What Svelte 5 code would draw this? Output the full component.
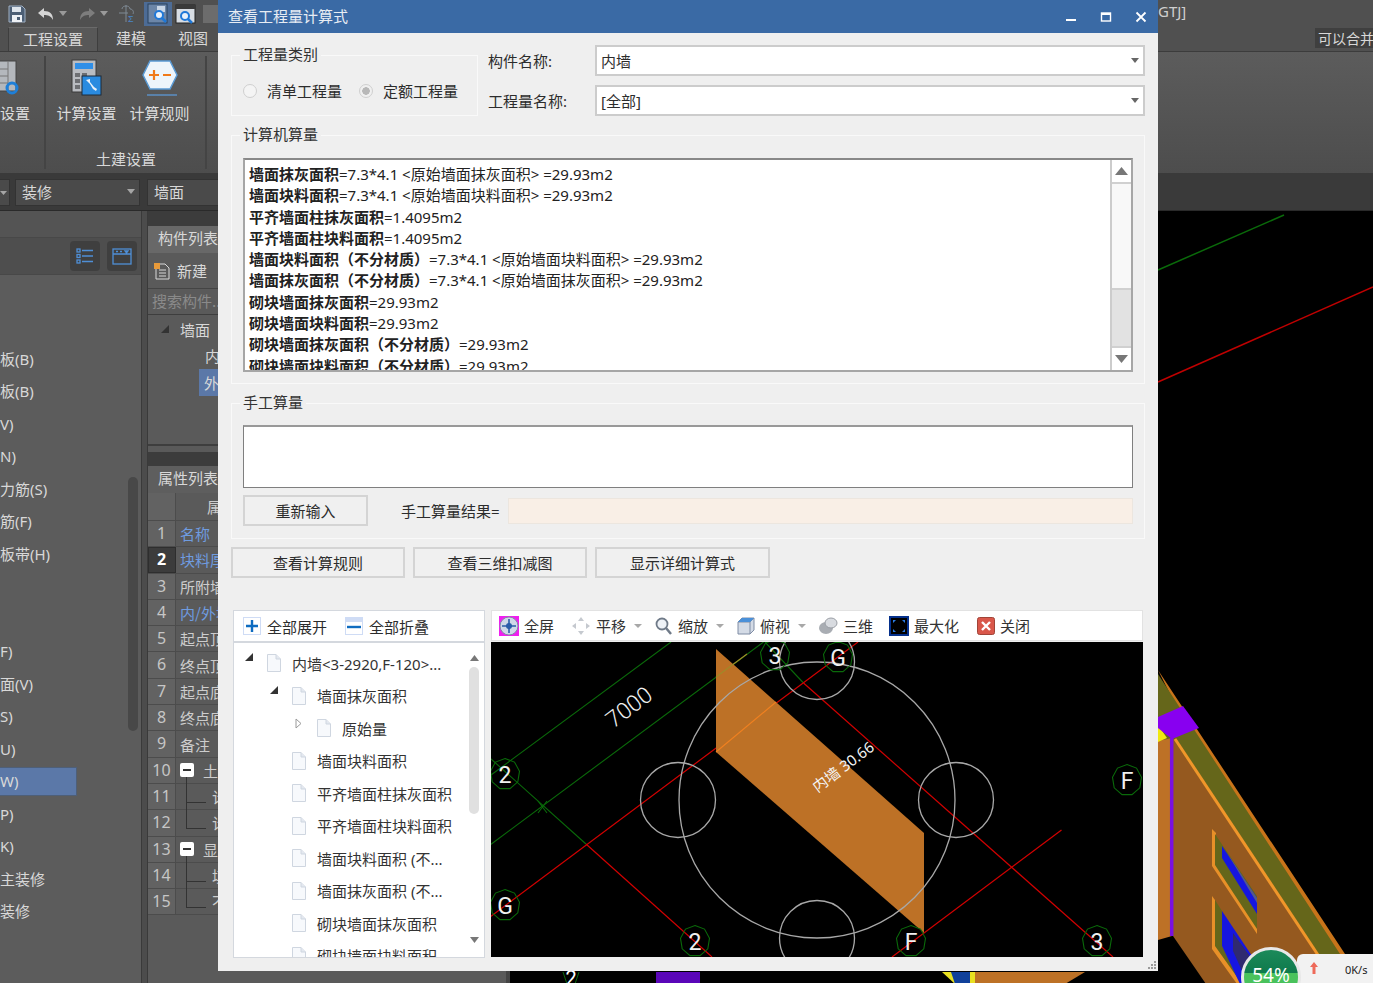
<script>
	const leftItems = ['板(B)', '板(B)', 'V)', 'N)', '力筋(S)', '筋(F)', '板带(H)', '', '', 'F)', '面(V)', 'S)', 'U)', 'W)', 'P)', 'K)', '主装修', '装修'];

	const props = [
		{ name: '名称', blue: true },
		{ name: '块料厚度(mm)', blue: true, active: true },
		{ name: '所附墙材质' },
		{ name: '内/外墙面标志', blue: true },
		{ name: '起点顶标高(m)' },
		{ name: '终点顶标高(m)' },
		{ name: '起点底标高(m)' },
		{ name: '终点底标高(m)' },
		{ name: '备注' },
		{ name: '土建业务属性', box: true },
		{ name: '计算设置', sub: true },
		{ name: '计算规则', sub: true },
		{ name: '显示样式', box: true },
		{ name: '填充颜色', sub: true },
		{ name: '不透明度', sub: true }
	];

	const calcLines = [
		['墙面抹灰面积', '=7.3*4.1 <原始墙面抹灰面积> =29.93m2'],
		['墙面块料面积', '=7.3*4.1 <原始墙面块料面积> =29.93m2'],
		['平齐墙面柱抹灰面积', '=1.4095m2'],
		['平齐墙面柱块料面积', '=1.4095m2'],
		['墙面块料面积（不分材质）', '=7.3*4.1 <原始墙面块料面积> =29.93m2'],
		['墙面抹灰面积（不分材质）', '=7.3*4.1 <原始墙面抹灰面积> =29.93m2'],
		['砌块墙面抹灰面积', '=29.93m2'],
		['砌块墙面块料面积', '=29.93m2'],
		['砌块墙面抹灰面积（不分材质）', '=29.93m2'],
		['砌块墙面块料面积（不分材质）', '=29.93m2']
	];

	const treeRows = [
		{ text: '内墙<3-2920,F-120>...', level: 0, arrow: 'open' },
		{ text: '墙面抹灰面积', level: 1, arrow: 'open' },
		{ text: '原始量', level: 2, arrow: 'closed' },
		{ text: '墙面块料面积', level: 1 },
		{ text: '平齐墙面柱抹灰面积', level: 1 },
		{ text: '平齐墙面柱块料面积', level: 1 },
		{ text: '墙面块料面积 (不...', level: 1 },
		{ text: '墙面抹灰面积 (不...', level: 1 },
		{ text: '砌块墙面抹灰面积', level: 1 },
		{ text: '砌块墙面块料面积', level: 1 }
	];

	const axisTags = [
		{ t: '3', x: 775, y: 655 },
		{ t: 'G', x: 838, y: 657 },
		{ t: '2', x: 505, y: 774 },
		{ t: 'F', x: 1127, y: 780 },
		{ t: 'G', x: 505, y: 905 },
		{ t: '2', x: 695, y: 941 },
		{ t: 'F', x: 911, y: 941 },
		{ t: '3', x: 1097, y: 941 }
	];

	const octagon = (cx, cy, r) => {
		let pts = [];
		for (let i = 0; i < 9; i++) {
			const a = (i / 9) * Math.PI * 2 - Math.PI / 2;
			pts.push((cx + r * Math.cos(a) * 0.95).toFixed(1) + ',' + (cy + r * Math.sin(a)).toFixed(1));
		}
		return pts.join(' ');
	};
</script>

{#snippet doc()}
	<svg class="doc" width="16" height="20" viewBox="0 0 16 20">
		<path d="M1.5 1.5h8.5l4.5 4.5v12.5h-13z" fill="#f7f9fc" stroke="#cfd6e0" />
		<path d="M10 1.5v4.5h4.5" fill="#e4e9f0" stroke="#cfd6e0" />
	</svg>
{/snippet}

{#snippet caret()}
	<svg class="caret" width="8" height="4" viewBox="0 0 8 4"><path d="M0 0h8L4 4z" fill="#a8a8a8" /></svg>
{/snippet}

{#snippet selectArrow()}
	<svg width="8" height="5" viewBox="0 0 8 5"><path d="M0 0h8L4 5z" fill="#666" /></svg>
{/snippet}

<div class="app">
	<header class="quick">
		<svg class="q" style="margin-left:8px" width="18" height="18" viewBox="0 0 18 18">
			<path d="M1 1h13l3 3v13H1z" fill="#4d5f75" stroke="#9fb0c4" />
			<rect x="4" y="2" width="9" height="5" fill="#dfe5ec" />
			<rect x="4" y="10" width="10" height="7" fill="#eef1f5" />
			<rect x="9" y="12" width="3" height="3" fill="#4d5f75" />
		</svg>
		<svg class="q" style="margin-left:11px" width="18" height="14" viewBox="0 0 18 14">
			<path d="M7 1 1 6l6 5V8c4 0 7 1 9 5 0-6-3-9-9-9z" fill="#d5d5d5" />
		</svg>
		<svg class="q" style="margin-left:4px" width="8" height="5" viewBox="0 0 8 5"><path d="M0 0h8L4 5z" fill="#9a9a9a" /></svg>
		<svg class="q" style="margin-left:11px" width="18" height="14" viewBox="0 0 18 14">
			<path d="M11 1l6 5-6 5V8C7 8 4 9 2 13c0-6 3-9 9-9z" fill="#7d7d7d" />
		</svg>
		<svg class="q" style="margin-left:4px" width="8" height="5" viewBox="0 0 8 5"><path d="M0 0h8L4 5z" fill="#9a9a9a" /></svg>
		<svg class="q" style="margin-left:10px" width="18" height="20" viewBox="0 0 18 20">
			<path d="M8 1v17M1 9h9M4 5c0-4 8-4 8 0 3 0 4 3 3 5" fill="none" stroke="#7f8a94" />
			<text x="10" y="18" font-size="9" fill="#4a86c8" font-family="Liberation Sans">Σ</text>
		</svg>
		<span class="q-active">
			<svg width="24" height="22" viewBox="0 0 24 22">
				<rect x="2" y="1" width="19" height="19" fill="#6c86a8" stroke="#29405c" />
				<rect x="11" y="3" width="8" height="6" fill="#c9d6e6" />
				<circle cx="13" cy="12" r="4" fill="#e8f1fb" stroke="#1f78d8" stroke-width="2" />
				<path d="M16 15l4 4" stroke="#1f78d8" stroke-width="2.5" />
			</svg>
		</span>
		<svg class="q" style="margin-left:3px" width="22" height="22" viewBox="0 0 22 22">
			<rect x="1" y="2" width="19" height="18" fill="#d8dde3" stroke="#222" />
			<rect x="1" y="2" width="19" height="4" fill="#3a3a3a" />
			<circle cx="10" cy="13" r="4" fill="#e8f1fb" stroke="#1f78d8" stroke-width="2" />
			<path d="M13 16l4 4" stroke="#1f78d8" stroke-width="2.5" />
		</svg>
		<span class="q-dim"></span>
		<span class="app-title">GTJ]</span>
	</header>

	<nav class="tabs">
		<span class="tab on">工程设置</span>
		<span class="tab t2">建模</span>
		<span class="tab t3">视图</span>
		<span class="merge">可以合并</span>
	</nav>

	<section class="ribbon">
		<div class="rib-group">
			<div class="rib-btn first">
				<svg width="20" height="38" viewBox="0 0 20 38">
					<rect x="-8" y="2" width="24" height="30" fill="#b4b8bd" stroke="#444" />
					<path d="M0 10h8M0 17h8M0 24h8M8 2v30" stroke="#777" />
					<circle cx="12" cy="29" r="5" fill="none" stroke="#1e7fd8" stroke-width="3" />
				</svg>
				<span>设置</span>
			</div>
		</div>
		<div class="rib-group wide">
			<div class="rib-row">
				<div class="rib-btn">
					<svg width="32" height="38" viewBox="0 0 32 38">
						<rect x="1" y="1" width="24" height="32" fill="#b9bcc1" stroke="#3a3a3a" />
						<rect x="4" y="4" width="18" height="6" fill="#2f8fe8" />
						<path d="M4 14h5v4H4zM11 14h5v4h-5zM4 20h5v4H4zM4 26h5v4H4z" fill="#6d6f73" />
						<rect x="11" y="17" width="19" height="19" fill="#2a8be0" stroke="#1c2a38" />
						<path d="M15 21l4 4 3 5 3 2 1-2-3-2-4-5 0-3z" fill="#e8f1fa" />
					</svg>
					<span>计算设置</span>
				</div>
				<div class="rib-btn">
					<svg width="38" height="38" viewBox="0 0 38 38">
						<path d="M2 16 9 2h20l7 14-7 14H9z" fill="#eef5fb" stroke="#5b9bd5" stroke-width="1.5" />
						<path d="M6 36h30" stroke="#5b8fc5" stroke-width="1.5" />
						<path d="M8 16h10M13 11v10M22 16h8" stroke="#f07a1a" stroke-width="2.2" />
					</svg>
					<span>计算规则</span>
				</div>
			</div>
			<div class="rib-label">土建设置</div>
		</div>
	</section>

	<section class="selectors">
		<span class="sel s0"><svg width="7" height="4" viewBox="0 0 7 4"><path d="M0 0h7L3.500 4z" fill="#a5a5a5" /></svg></span>
		<span class="sel s1">装修<svg width="8" height="5" viewBox="0 0 8 5"><path d="M0 0h8L4 5z" fill="#a5a5a5" /></svg></span>
		<span class="sel s2">墙面</span>
	</section>

	<main class="work">
		<aside class="left">
			<div class="left-head"></div>
			<div class="left-tools">
				<span class="icon-btn">
					<svg width="18" height="16" viewBox="0 0 18 16" fill="none" stroke="#4f8fd6" stroke-width="1.3">
						<rect x="1" y="1" width="3" height="3" /><rect x="1" y="6.5" width="3" height="3" /><rect x="1" y="12" width="3" height="3" />
						<path d="M6 2.5h11M6 8h11M6 13.5h11" />
					</svg>
				</span>
				<span class="icon-btn">
					<svg width="20" height="17" viewBox="0 0 20 17" fill="none" stroke="#4f8fd6" stroke-width="1.3">
						<rect x="1" y="1" width="18" height="15" /><path d="M1 6h18M4 3.5h2M8 3.5h2M13 3h3l-1.5 2z" />
					</svg>
				</span>
			</div>
			<ul class="left-list">
				{#each leftItems as item}
					<li class:picked={item === 'W)'}><span>{item}</span></li>
				{/each}
			</ul>
			<span class="left-scroll"></span>
		</aside>
		<div class="split"></div>
		<section class="mid">
			<div class="mid-inner">
				<div class="mid-dark"></div>
				<div class="panel-tab">构件列表</div>
				<div class="mid-new">
					<svg width="18" height="18" viewBox="0 0 18 18">
						<path d="M3 2h9l4 4v11H3z" fill="none" stroke="#d8d8d8" />
						<path d="M6 8h7M6 11h7M6 14h7" stroke="#d8d8d8" />
						<rect x="1" y="1" width="6" height="6" fill="#e79a3a" />
					</svg>
					新建
				</div>
				<div class="mid-search">搜索构件...</div>
				<div class="mid-tree">
					<div class="tree-root"><svg width="8" height="8" viewBox="0 0 8 8"><path d="M8 0v8H0z" fill="#333" /></svg>墙面</div>
					<div class="tree-leaf">内墙</div>
					<div class="tree-leaf sel-leaf">外墙</div>
				</div>
				<div class="mid-bar"></div>
				<div class="panel-tab attr">属性列表</div>
				<div class="prop-head"><span class="n"></span><span class="c">属性名称</span></div>
				{#each props as p, i}
					<div class="prop" class:active={p.active}>
						<span class="n">{i + 1}</span>
						<span class="c" class:blue={p.blue}>
							{#if p.box}<i class="box"></i>{/if}
							{#if p.sub}<i class="branch"></i>{/if}
							{p.name}
						</span>
					</div>
				{/each}
			</div>
		</section>
		<div class="view3d">
			<svg width="863" height="773" viewBox="510 210 863 773">
				<rect x="510" y="210" width="863" height="773" fill="#000" />
				<path d="M1158 269 1284 214" stroke="#0a6a0a" stroke-width="1.5" />
				<path d="M1158 381 1373 286" stroke="#c00000" stroke-width="1.5" />
				<path d="M656 971h44v12h-44z" fill="#5a06b8" />
				<path d="M942 971h33v12h-20z" fill="#e8e020" />
				<path d="M951 971h19v12h-15z" fill="#10409a" />
				<path d="M975 971h110l-20 12h-90z" fill="#bd7126" />
				<path d="M563 971l4 12M579 971l-4 12" stroke="#0a6a0a" />
				<text x="571" y="984" font-size="20" fill="#fff" text-anchor="middle" font-family="Roboto">2</text>

				<path d="M1158 669 1345 953l40 30h-70z" fill="#c8741a" />
				<path d="M1158 673 1340 953 1385 983H1300L1158 760z" fill="#65661a" />
				<path d="M1158 740 1172 737V935L1158 939z" fill="#bd7126" />
				<path d="M1173 738 1318 953 1340 983H1206L1173 935z" fill="#95591f" />
				<path d="M1175 738 1320 957" stroke="#f0962a" stroke-width="3" />
				<path d="M1171.7 737V935" stroke="#7a10e0" stroke-width="3.5" />
				<path d="M1158 724 1167 737 1158 741z" fill="#f0e810" />
				<path d="M1158 716 1183 705 1199 727 1172 738 1158 727z" fill="#8800f0" />

				<path d="M1212 828V865L1257 933V927L1216 864V832z" fill="#e89028" />
				<path d="M1215 833 1257 895V928L1215 864z" fill="#65661a" />
				<path d="M1222 845 1257 897V913L1222 857z" fill="#1616e0" />
				<path d="M1226 850 1257 897V902z" fill="#555a8a" />
				<path d="M1215 899 1222 910V945L1242 983H1237L1215 950z" fill="#65661a" />
				<path d="M1212 895V948L1237 983H1242L1215 945V899z" fill="#e89028" />
				<path d="M1222 910 1252 955V983H1240L1222 945z" fill="#1616e0" />
				<path d="M1233 932 1252 958V983H1248L1233 950z" fill="#302a70" />
			</svg>
		</div>
	</main>

	<div class="net">
		<div class="ball"><span>54%</span></div>
		<div class="speed">
			<svg width="10" height="12" viewBox="0 0 10 12"><path d="M5 0l4 5H6.5v7h-3V5H1z" fill="#ee6a5a" /></svg>
			<span>0K/s</span>
		</div>
	</div>

	<div class="dialog">
		<div class="title">
			<span>查看工程量计算式</span>
			<svg class="win" width="12" height="12" viewBox="0 0 12 12" style="margin-right:23px"><path d="M1 9h10" stroke="#fff" stroke-width="2" /></svg>
			<svg class="win" width="12" height="12" viewBox="0 0 12 12" style="margin-right:23px"><rect x="1.5" y="2" width="9" height="8" fill="none" stroke="#fff" stroke-width="1.4" /><path d="M1.5 3h9" stroke="#fff" stroke-width="2" /></svg>
			<svg class="win" width="12" height="12" viewBox="0 0 12 12"><path d="M1.5 1.5l9 9M10.500 1.500l-9 9" stroke="#fff" stroke-width="1.8" /></svg>
		</div>

		<div class="body">
			<div class="top-row">
				<fieldset class="kind">
					<legend>工程量类别</legend>
					<div class="radios">
						<label class="radio"><i></i>清单工程量</label>
						<label class="radio on"><i></i>定额工程量</label>
					</div>
				</fieldset>
				<div class="names">
					<div class="name-row"><span class="lbl">构件名称:</span><div class="select">内墙{@render selectArrow()}</div></div>
					<div class="name-row"><span class="lbl">工程量名称:</span><div class="select">[全部]{@render selectArrow()}</div></div>
				</div>
			</div>

			<fieldset class="auto">
				<legend>计算机算量</legend>
				<div class="lines-box">
					<div class="lines">
						{#each calcLines as line}
							<div class="line"><b>{line[0]}</b>{line[1]}</div>
						{/each}
					</div>
					<div class="vscroll">
						<span class="sb-btn"><svg width="13" height="8" viewBox="0 0 13 8"><path d="M0 8h13L6.500 0z" fill="#777" /></svg></span>
						<span class="sb-thumb"></span>
						<span class="sb-track"></span>
						<span class="sb-btn"><svg width="13" height="8" viewBox="0 0 13 8"><path d="M0 0h13L6.500 8z" fill="#777" /></svg></span>
					</div>
				</div>
			</fieldset>

			<fieldset class="manual">
				<legend>手工算量</legend>
				<div class="manual-input"></div>
				<div class="manual-foot">
					<button class="btn reenter">重新输入</button>
					<span class="res-lbl">手工算量结果=</span>
					<div class="res"></div>
				</div>
			</fieldset>

			<div class="actions">
				<button class="btn act">查看计算规则</button>
				<button class="btn act">查看三维扣减图</button>
				<button class="btn act">显示详细计算式</button>
			</div>

			<div class="bottom">
				<div class="tree-panel">
					<div class="tree-tools">
						<span class="tt">
							<svg width="18" height="18" viewBox="0 0 18 18"><rect width="18" height="18" fill="#cfdcf5" /><rect x="1" y="1" width="16" height="16" fill="#fff" /><path d="M3 9h12M9 3v12" stroke="#0f6cc0" stroke-width="2.4" /></svg>
							全部展开
						</span>
						<span class="tt">
							<svg width="18" height="18" viewBox="0 0 18 18"><rect width="18" height="18" fill="#cfdcf5" /><rect x="1" y="5" width="16" height="12" fill="#fff" /><path d="M2 10h14" stroke="#0f6cc0" stroke-width="2.4" /></svg>
							全部折叠
						</span>
					</div>
					<div class="tree-body">
						<div class="tree-rows">
							{#each treeRows as row}
								<div class="trow lv{row.level}">
									<span class="tarrow">
										{#if row.arrow === 'open'}
											<svg width="8" height="8" viewBox="0 0 8 8"><path d="M8 0v8H0z" fill="#333" /></svg>
										{:else if row.arrow === 'closed'}
											<svg width="7" height="11" viewBox="0 0 7 11"><path d="M1 1l5 4.500L1 10z" fill="none" stroke="#9a9a9a" /></svg>
										{/if}
									</span>
									{@render doc()}
									<span class="ttext">{row.text}</span>
								</div>
							{/each}
						</div>
						<div class="tree-scroll">
							<svg width="9" height="6" viewBox="0 0 9 6"><path d="M0 6h9L4.500 0z" fill="#777" /></svg>
							<span class="tree-thumb"></span>
							<svg width="9" height="6" viewBox="0 0 9 6"><path d="M0 0h9L4.500 6z" fill="#777" /></svg>
						</div>
					</div>
				</div>

				<div class="view-panel">
					<div class="view-tools">
						<span class="vt w1">
							<svg width="20" height="20" viewBox="0 0 20 20"><rect width="20" height="20" fill="#f01ef0" /><circle cx="10" cy="10" r="9" fill="#cfd8e8" stroke="#7f8ca4" /><path d="M10 3v14M3 10h14" stroke="#2a5ca8" stroke-width="1.6" /><circle cx="10" cy="10" r="3" fill="#2a5ca8" /></svg>
							全屏
						</span>
						<span class="vt w2">
							<svg width="20" height="20" viewBox="0 0 20 20" fill="#c5c9cf"><path d="M10 1l3 4H7zM10 19l-3-4h6zM1 10l4-3v6zM19 10l-4 3V7z" /></svg>
							平移{@render caret()}
						</span>
						<span class="vt w3">
							<svg width="18" height="20" viewBox="0 0 18 20"><circle cx="7" cy="8" r="5.500" fill="#eef2f7" stroke="#6f7a88" stroke-width="1.800" /><path d="M11 12l5 6" stroke="#6f7a88" stroke-width="2.500" /></svg>
							缩放{@render caret()}
						</span>
						<span class="vt w4">
							<svg width="18" height="20" viewBox="0 0 18 20"><path d="M5 2h12v12l-4 4H1V6z" fill="#d4dbe6" stroke="#7f8ca4" /><path d="M1 6h12v12M13 6l4-4" fill="none" stroke="#7f8ca4" /><path d="M5 2h12l-4 4H1z" fill="#4a90d9" /></svg>
							俯视{@render caret()}
						</span>
						<span class="vt w5">
							<svg width="20" height="20" viewBox="0 0 20 20"><ellipse cx="8" cy="12" rx="7" ry="6" fill="#a9adb3" /><ellipse cx="13" cy="7" rx="6" ry="5" fill="#d8dbe0" stroke="#9a9ea5" /></svg>
							三维
						</span>
						<span class="vt w6">
							<svg width="20" height="20" viewBox="0 0 20 20"><rect width="20" height="20" fill="#05308c" /><rect x="2" y="2" width="16" height="16" fill="#000" /><path d="M4 4l3 0-3 3zM16 4v3l-3-3zM4 16v-3l3 3zM16 16h-3l3-3z" fill="#2a7ae0" /></svg>
							最大化
						</span>
						<span class="vt">
							<svg width="18" height="18" viewBox="0 0 18 18"><rect x="0.500" y="0.500" width="17" height="17" rx="2" fill="#d9574a" stroke="#a04438" /><path d="M5 5l8 8M13 5l-8 8" stroke="#fff" stroke-width="2.400" /></svg>
							关闭
						</span>
					</div>
					<div class="view-canvas">
						<svg width="652" height="315" viewBox="491 642 652 315">
							<rect x="491" y="642" width="652" height="315" fill="#000" />
							<g fill="none" stroke="#0a6a0a" stroke-width="1.100">
								<path d="M671 642 491 775" />
								<path d="M763.500 642 490 845" />
								<path d="M490 758 586 844" />
								<path d="M538 801l9 12M547 801l-9 12" />
								<path d="M765 642 803.500 683" />
							</g>
							<g fill="none" stroke="#d20000" stroke-width="1.200">
								<path d="M586 844 712 957" />
								<path d="M490 917 858 642" />
								<path d="M803.500 683 1113 957" />
								<path d="M892 957 1061.500 830" />
							</g>
							<path d="M716 649 924 833V933L716 752z" fill="#bd7126" />
							<path d="M716 752 776 702" stroke="#f08020" stroke-width="1.100" />
							<path d="M716 677 747 654" stroke="#a08a28" stroke-width="1.100" />
							<g fill="none" stroke="#a8a8a8" stroke-width="1.300">
								<circle cx="817" cy="800" r="138" />
								<circle cx="678" cy="800" r="37.500" />
								<circle cx="956" cy="800" r="37.500" />
								<circle cx="817" cy="662" r="37.500" />
								<circle cx="817" cy="938" r="37.500" />
							</g>
							{#each axisTags as tag}
								<polygon points={octagon(tag.x, tag.y, 15.500)} fill="none" stroke="#0a6a0a" stroke-width="1.100" />
								<text class="axis" x={tag.x} y={tag.y + 8.500} text-anchor="middle">{tag.t}</text>
							{/each}
							<text class="dim" transform="translate(629 707) rotate(-37)" text-anchor="middle" y="8">7000</text>
							<text class="wall" transform="translate(844 768) rotate(-37)" text-anchor="middle" y="4">内墙 30.66</text>
						</svg>
					</div>
				</div>
			</div>
		</div>

		<svg class="grip" width="10" height="10" viewBox="0 0 10 10" fill="#9a9a9a">
			<rect x="7" y="1" width="2" height="2" /><rect x="4" y="4" width="2" height="2" /><rect x="7" y="4" width="2" height="2" />
			<rect x="1" y="7" width="2" height="2" /><rect x="4" y="7" width="2" height="2" /><rect x="7" y="7" width="2" height="2" />
		</svg>
	</div>
</div>

<style>
	:global(body) {
		margin: 0;
		background: #000;
	}
	.app {
		position: relative;
		width: 1373px;
		height: 983px;
		overflow: hidden;
		display: flex;
		flex-direction: column;
		background: #5a5a5a;
		color: #d8d8d8;
		font-family: 'Noto Sans CJK SC', 'Noto Sans', sans-serif;
		font-size: 15px;
	}
	svg {
		display: block;
		flex: none;
	}

	/* quick access */
	.quick {
		height: 27px;
		display: flex;
		align-items: center;
		background: #505050;
	}
	.q-active {
		margin-left: 8px;
		width: 28px;
		height: 24px;
		display: flex;
		align-items: center;
		justify-content: center;
		background: #4d6c96;
	}
	.q-dim {
		margin-left: 6px;
		width: 16px;
		height: 18px;
		background: #6c6c6c;
	}
	.app-title {
		margin-left: auto;
		width: 215px;
		padding-bottom: 5px;
		font-size: 15px;
		font-family: 'Noto Sans', sans-serif;
		color: #cfcfcf;
	}

	/* tabs */
	.tabs {
		height: 24px;
		display: flex;
		align-items: flex-end;
		background: #505050;
		border-bottom: 1px solid #3c3c3c;
	}
	.tab {
		line-height: 22px;
		height: 24px;
	}
	.tab.on {
		margin-left: 8px;
		width: 90px;
		text-align: center;
		box-sizing: border-box;
		background: #585858;
		border: 1px solid #3e3e3e;
		border-bottom: none;
		border-top-color: #6a6a6a;
	}
	.t2 {
		margin-left: 18px;
	}
	.t3 {
		margin-left: 32px;
	}
	.merge {
		margin-left: auto;
		width: 58px;
		height: 20px;
		margin-bottom: 3px;
		background: #3f3f3f;
		font-size: 14px;
		line-height: 20px;
		white-space: nowrap;
		overflow: hidden;
		padding-left: 3px;
		box-sizing: border-box;
	}

	/* ribbon */
	.ribbon {
		height: 122px;
		display: flex;
		background: linear-gradient(#5c5c5c, #4d4d4d);
		border-bottom: 1px solid #3a3a3a;
		box-sizing: border-box;
	}
	.rib-group {
		width: 44px;
		margin-top: 4px;
		height: 113px;
		border-right: 2px solid #444;
	}
	.rib-group.wide {
		width: 159px;
		display: flex;
		flex-direction: column;
	}
	.rib-row {
		display: flex;
		gap: 12px;
		padding-left: 10px;
	}
	.rib-btn {
		width: 61px;
		height: 70px;
		padding-top: 3px;
		display: flex;
		flex-direction: column;
		align-items: center;
		gap: 5px;
		white-space: nowrap;
		color: #dcdcdc;
	}
	.rib-btn.first {
		width: 30px;
		align-items: flex-start;
	}
	.rib-label {
		margin-top: 18px;
		text-align: center;
		padding-left: 1px;
		line-height: 24px;
	}

	/* selector row */
	.selectors {
		height: 37px;
		box-sizing: border-box;
		padding-top: 5px;
		display: flex;
		gap: 5px;
		background: #3a3a3a;
		border-bottom: 1px solid #2a2a2a;
	}
	.sel {
		height: 27px;
		box-sizing: border-box;
		background: #4a4a4a;
		border: 1px solid #333;
		padding: 0 4px 2px 6px;
		line-height: 24px;
		display: flex;
		align-items: center;
		justify-content: space-between;
	}
	.s0 {
		width: 10px;
		padding: 0;
		border-left: 0;
	}
	.s1 {
		width: 125px;
	}
	.s2 {
		width: 400px;
		margin-left: 2px;
	}

	.work {
		flex: 1;
		display: flex;
		min-height: 0;
	}

	/* left panel */
	.left {
		position: relative;
		width: 141px;
		flex: none;
		background: #5c5c5c;
	}
	.left-head {
		height: 26px;
		background: #545454;
		border-bottom: 1px solid #484848;
	}
	.left-tools {
		height: 37px;
		display: flex;
		justify-content: flex-end;
		align-items: center;
		gap: 7px;
		padding-right: 4px;
		box-sizing: border-box;
		background: #4e4e4e;
		border-bottom: 1px solid #484848;
	}
	.icon-btn {
		width: 30px;
		height: 30px;
		display: flex;
		align-items: center;
		justify-content: center;
		background: #3f3f3f;
		border-radius: 4px;
	}
	.left-list {
		list-style: none;
		margin: 0;
		padding: 68px 0 0;
	}
	.left-list li {
		height: 32.500px;
		display: flex;
		align-items: center;
		font-family: 'Noto Sans', 'Noto Sans CJK SC', sans-serif;
		font-size: 15px;
	}
	.left-list li span {
		height: 27px;
		line-height: 27px;
		display: block;
	}
	.left-list li.picked span {
		width: 76px;
		background: #5b78a8;
		outline: 1px solid #4e5f78;
	}
	.left-scroll {
		position: absolute;
		left: 128px;
		top: 266px;
		width: 10px;
		height: 254px;
		border-radius: 5px;
		background: #484848;
	}
	.split {
		width: 7px;
		flex: none;
		background: #4c4c4c;
		border-left: 1px solid #3a3a3a;
		border-right: 1px solid #3a3a3a;
		box-sizing: border-box;
	}

	/* middle panel */
	.mid {
		width: 362px;
		flex: none;
		background: #5a5a5a;
		border-right: 4px solid #444;
		box-sizing: border-box;
	}
	.mid-inner {
		width: 70px;
		overflow: hidden;
		white-space: nowrap;
	}
	.mid-dark {
		height: 15px;
		background: #3c3c3c;
	}
	.panel-tab {
		height: 27px;
		line-height: 24px;
		padding-left: 10px;
		background: #686868;
	}
	.mid-new {
		height: 36px;
		display: flex;
		align-items: center;
		gap: 6px;
		padding-left: 5px;
		border-bottom: 1px solid #444;
		box-sizing: border-box;
	}
	.mid-search {
		height: 26px;
		line-height: 24px;
		padding-left: 4px;
		color: #8a8a8a;
		border-bottom: 1px solid #3e3e3e;
		box-sizing: border-box;
	}
	.mid-tree {
		height: 131px;
		box-sizing: border-box;
		border-bottom: 2px solid #3e3e3e;
		padding-top: 1px;
	}
	.tree-root {
		display: flex;
		align-items: center;
		gap: 11px;
		padding-left: 13px;
		height: 26px;
	}
	.tree-leaf {
		padding-left: 57px;
		height: 27px;
		line-height: 27px;
	}
	.sel-leaf {
		margin-left: 51px;
		padding-left: 5px;
		background: #5b78a8;
	}
	.mid-bar {
		margin-top: 6px;
		height: 14px;
		background: #3c3c3c;
	}
	.panel-tab.attr {
		background: #5e5e5e;
	}
	.prop-head,
	.prop {
		display: flex;
		height: 26.300px;
		box-sizing: border-box;
		border-bottom: 1px solid #4c4c4c;
		line-height: 25px;
	}
	.prop-head {
		height: 28px;
	}
	.n {
		width: 27px;
		flex: none;
		text-align: center;
		background: #626262;
		color: #c6c6c6;
		font-family: 'Noto Sans', sans-serif;
		font-size: 16px;
		border-right: 1px solid #4c4c4c;
	}
	.c {
		padding-left: 4px;
		display: flex;
		align-items: center;
		gap: 0;
		color: #cdcdcd;
	}
	.prop-head .c {
		padding-left: 31px;
	}
	.blue {
		color: #6f9ce0 !important;
	}
	.prop.active .n {
		background: #3c3c3c;
		color: #fff;
		font-weight: 700;
		outline: 1px solid #2e2e2e;
		outline-offset: -1px;
	}
	.box {
		width: 14px;
		height: 14px;
		margin-right: 9px;
		background: #fff;
		border-radius: 2px;
		position: relative;
		flex: none;
	}
	.box::after {
		content: '';
		position: absolute;
		left: 3px;
		right: 3px;
		top: 6px;
		height: 2px;
		background: #333;
	}
	.branch {
		width: 20px;
		height: 26px;
		margin: -14px 6px 0 6px;
		border-left: 1px solid #333;
		border-bottom: 1px solid #333;
		flex: none;
		box-sizing: border-box;
	}
	.view3d {
		flex: 1;
		min-width: 0;
	}

	/* network badge */
	.net {
		position: absolute;
		left: 1241px;
		top: 947px;
		display: flex;
		align-items: flex-start;
	}
	.ball {
		width: 60px;
		height: 60px;
		box-sizing: border-box;
		border-radius: 50%;
		border: 3px solid #e8e8e8;
		background: linear-gradient(#1c8a5a 0, #0f7a4c 42%, #49c25c 42%);
		color: #fff;
		font-size: 19px;
		text-align: center;
		line-height: 50px;
		font-family: 'Noto Sans', sans-serif;
		z-index: 1;
	}
	.speed {
		margin: 7px 0 0 -4px;
		width: 80px;
		height: 40px;
		background: #f2f2f2;
		color: #222;
		font-family: 'Noto Sans', sans-serif;
		font-size: 11px;
		display: flex;
		align-items: flex-start;
		padding: 8px 0 0 12px;
		gap: 26px;
		box-sizing: border-box;
		border-radius: 6px 0 0 0;
	}

	/* dialog */
	.dialog {
		position: absolute;
		left: 218px;
		top: 0;
		width: 940px;
		height: 971px;
		background: #efefef;
		color: #2c2c2c;
		font-family: 'Noto Sans', 'Noto Sans CJK SC', sans-serif;
		box-sizing: border-box;
	}
	.title {
		height: 33px;
		display: flex;
		align-items: center;
		padding: 0 11px 0 10px;
		background: #3a6aa5;
		color: #e8edf4;
	}
	.title span {
		margin-right: auto;
		padding-bottom: 2px;
	}
	.body {
		padding: 12px 13px 0 13px;
	}
	fieldset {
		margin: 0;
		padding: 0;
		min-width: 0;
		border: 1px solid #f9f9f9;
		box-sizing: border-box;
	}
	legend {
		margin-left: -3px;
		padding: 0 3px;
		line-height: 20px;
		color: #333;
		position: relative;
		top: -1px;
	}
	.top-row {
		display: flex;
		gap: 10px;
		height: 80px;
	}
	.kind {
		width: 247px;
		height: 71px;
		padding: 0 0 0 11px;
	}
	.radios {
		display: flex;
		gap: 17px;
		padding-top: 16px;
	}
	.radio {
		display: flex;
		align-items: center;
		gap: 10px;
		line-height: 20px;
		white-space: nowrap;
	}
	.radio i {
		width: 14px;
		height: 14px;
		border-radius: 50%;
		border: 1px solid #cfcfcf;
		background: #f4f4f4;
		box-sizing: border-box;
		flex: none;
	}
	.radio.on i {
		background: radial-gradient(circle, #b8b8b8 0 3.500px, #f0f0f0 4px);
	}
	.names {
		flex: 1;
		display: flex;
		flex-direction: column;
		gap: 9px;
	}
	.name-row {
		display: flex;
		align-items: center;
	}
	.lbl {
		width: 107px;
		flex: none;
	}
	.select {
		flex: 1;
		height: 31px;
		box-sizing: border-box;
		background: #fff;
		border: 2px solid #ccc;
		padding: 0 4px;
		display: flex;
		align-items: center;
		justify-content: space-between;
		line-height: 20px;
	}
	.auto {
		height: 259px;
		padding: 13px 11px 0;
	}
	.lines-box {
		height: 214px;
		box-sizing: border-box;
		border: 2px solid #a6a6a6;
		border-top-color: #888;
		background: #fff;
		display: flex;
	}
	.lines {
		flex: 1;
		overflow: hidden;
		padding: 4px 0 0 4px;
		white-space: nowrap;
		color: #222;
	}
	.line {
		height: 21.300px;
		line-height: 21.300px;
	}
	.line b {
		font-weight: 700;
	}
	.vscroll {
		width: 21px;
		display: flex;
		flex-direction: column;
		border-left: 2px solid #ccc;
		box-sizing: border-box;
	}
	.sb-btn {
		height: 22px;
		flex: none;
		display: flex;
		align-items: center;
		justify-content: center;
	}
	.sb-thumb {
		height: 108px;
		background: #f8f8f8;
		border-top: 2px solid #d0d0d0;
		border-bottom: 2px solid #d0d0d0;
		box-sizing: border-box;
	}
	.sb-track {
		flex: 1;
		background: #e2e2e2;
		border-bottom: 2px solid #d0d0d0;
	}
	.manual {
		height: 146px;
		margin-top: 9px;
		padding: 12px 11px 0;
	}
	.manual-input {
		height: 63px;
		box-sizing: border-box;
		border: 1px solid #7f7f7f;
		border-top: 2px solid #999;
		background: #fff;
	}
	.manual-foot {
		margin-top: 7px;
		display: flex;
		align-items: center;
	}
	.btn {
		background: #f0f0f0;
		border: 2px solid #d4d4d4;
		color: #2c2c2c;
		font: inherit;
		padding: 0;
		box-sizing: border-box;
	}
	.reenter {
		width: 125px;
		height: 31px;
	}
	.res-lbl {
		margin-left: 33px;
		width: 107px;
		flex: none;
		white-space: nowrap;
	}
	.res {
		flex: 1;
		height: 26px;
		background: #f9efe6;
		border: 1px solid #ece6df;
		box-sizing: border-box;
	}
	.actions {
		display: flex;
		gap: 8px;
		margin-top: 8px;
	}
	.act {
		width: 174px;
		height: 31px;
		flex: none;
	}
	.act:last-child {
		width: 175px;
	}
	.bottom {
		display: flex;
		margin-top: 32px;
		gap: 6px;
		padding-left: 2px;
	}
	.tree-panel {
		width: 252px;
		flex: none;
		border: 1px solid #d4d8de;
		box-sizing: border-box;
		background: #fff;
		height: 348px;
		display: flex;
		flex-direction: column;
	}
	.tree-tools {
		height: 30px;
		flex: none;
		display: flex;
		align-items: center;
		gap: 18px;
		padding-left: 9px;
		border-bottom: 2px solid #d4d8de;
		box-sizing: content-box;
	}
	.tt {
		display: flex;
		align-items: center;
		gap: 6px;
	}
	.tree-body {
		flex: 1;
		display: flex;
		min-height: 0;
		overflow: hidden;
	}
	.tree-rows {
		flex: 1;
		padding-top: 4px;
		overflow: hidden;
		white-space: nowrap;
	}
	.trow {
		height: 32.500px;
		display: flex;
		align-items: center;
		color: #333;
	}
	.tarrow {
		width: 11px;
		height: 20px;
		flex: none;
		display: flex;
		align-items: flex-start;
		margin-right: 10px;
	}
	.lv0 {
		padding-left: 11px;
	}
	.lv1 {
		padding-left: 36px;
	}
	.lv2 {
		padding-left: 61px;
	}
	.ttext {
		margin-left: 10px;
	}
	.tree-scroll {
		width: 14px;
		flex: none;
		margin-right: 3px;
		display: flex;
		flex-direction: column;
		align-items: center;
		padding-top: 12px;
		box-sizing: border-box;
		height: 304px;
	}
	.tree-thumb {
		width: 10px;
		height: 147px;
		margin: 6px 0 123px;
		border-radius: 5px;
		background: #e0e0e0;
		flex: none;
	}
	.view-panel {
		width: 652px;
		flex: none;
	}
	.view-tools {
		height: 31px;
		box-sizing: border-box;
		background: #fff;
		border: 1px solid #e2e2e2;
		display: flex;
		align-items: center;
		padding-left: 7px;
		white-space: nowrap;
		color: #333;
	}
	.vt {
		display: flex;
		align-items: center;
		gap: 5px;
	}
	.vt .caret {
		margin-left: 3px;
	}
	.w1 {
		margin-right: 17px;
	}
	.w2 {
		margin-right: 13px;
	}
	.w3 {
		margin-right: 13px;
	}
	.w4 {
		margin-right: 12px;
	}
	.w5 {
		margin-right: 16px;
	}
	.w6 {
		margin-right: 18px;
	}
	.view-canvas {
		margin-top: 1px;
		height: 315px;
		background: #000;
	}
	.axis {
		font-family: 'Roboto', sans-serif;
		font-size: 23px;
		fill: #f0f0f0;
	}
	.dim {
		font-family: 'Roboto', sans-serif;
		font-weight: 300;
		font-size: 23px;
		fill: #f0f0f0;
	}
	.wall {
		font-size: 15px;
		fill: #f5f5f5;
	}
	.grip {
		position: absolute;
		right: 1px;
		bottom: 1px;
	}
</style>
